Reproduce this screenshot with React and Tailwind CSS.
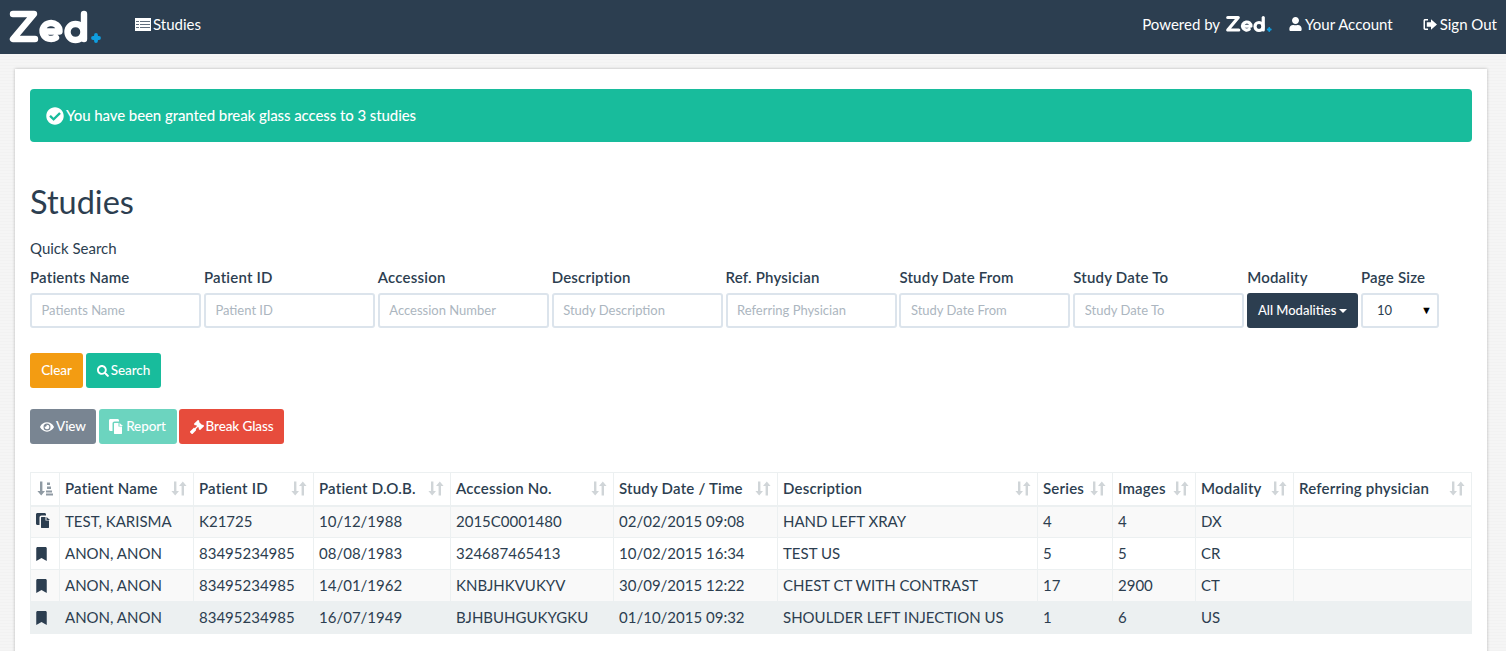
import { FaCheckCircle, FaEye, FaGavel, FaSearch, FaUser, FaBookmark } from "react-icons/fa"

const filters = [
    { label: "Patients Name", placeholder: "Patients Name" },
    { label: "Patient ID", placeholder: "Patient ID" },
    { label: "Accession", placeholder: "Accession Number" },
    { label: "Description", placeholder: "Study Description" },
    { label: "Ref. Physician", placeholder: "Referring Physician" },
    { label: "Study Date From", placeholder: "Study Date From" },
    { label: "Study Date To", placeholder: "Study Date To" },
]

const columns = [
    { name: "Patient Name", width: "w-[134px]" },
    { name: "Patient ID", width: "w-[120px]" },
    { name: "Patient D.O.B.", width: "w-[137px]" },
    { name: "Accession No.", width: "w-[163px]" },
    { name: "Study Date / Time", width: "w-[164px]" },
    { name: "Description", width: "w-[260px]" },
    { name: "Series", width: "w-[75px]" },
    { name: "Images", width: "w-[83px]" },
    { name: "Modality", width: "w-[98px]" },
    { name: "Referring physician", width: "" },
]

const rows = [
    ["TEST, KARISMA", "K21725", "10/12/1988", "2015C0001480", "02/02/2015 09:08", "HAND LEFT XRAY", "4", "4", "DX", ""],
    ["ANON, ANON", "83495234985", "08/08/1983", "324687465413", "10/02/2015 16:34", "TEST US", "5", "5", "CR", ""],
    ["ANON, ANON", "83495234985", "14/01/1962", "KNBJHKVUKYV", "30/09/2015 12:22", "CHEST CT WITH CONTRAST", "17", "2900", "CT", ""],
    ["ANON, ANON", "83495234985", "16/07/1949", "BJHBUHGUKYGKU", "01/10/2015 09:32", "SHOULDER LEFT INJECTION US", "1", "6", "US", ""],
]

function ZedLogo({ className }) {
    return (
        <svg viewBox="8 8 95 36" className={className} fill="none" stroke="currentColor" strokeWidth="6.4" strokeLinecap="round" strokeLinejoin="round">
            <path d="M13 13H34L13 38H35" />
            <path d="M43 30.5H59.5A8.5 8 0 1 0 56 36.5" />
            <circle cx="75.5" cy="31" r="8" />
            <path d="M84 13V38" />
            <path d="M93 37H99M96 34V40" stroke="#0f9ee0" strokeWidth="3.8" />
        </svg>
    )
}

function ListIcon() {
    return (
        <svg viewBox="0 0 16 13" className="w-4 h-[13px]" fill="white">
            <path d="M0 0H16V13H0ZM5 3V3.8H15V3ZM5 6V6.8H15V6ZM5 9V9.8H15V9ZM1 3V3.8H4V3ZM1 6V6.8H4V6ZM1 9V9.8H4V9Z" fillRule="evenodd" />
        </svg>
    )
}

function SignOutIcon() {
    return (
        <svg viewBox="0 0 14 13" className="w-3.5 h-[13px]" fill="white">
            <path d="M5 1H2.2C1 1 .5 1.7.5 2.7V10.3C.5 11.3 1 12 2.2 12H5V10.6H2.6C2.1 10.6 2 10.3 2 10V3C2 2.7 2.1 2.4 2.6 2.4H5Z" />
            <path d="M8 1.2L14 6.5L8 11.8V8.7H3.8V4.3H8Z" />
        </svg>
    )
}

function CopyIcon({ className }) {
    return (
        <svg viewBox="0 0 15 15" className={className} fill="currentColor">
            <path d="M0 1.5C0 .6.6 0 1.5 0H8.5C9.4 0 10 .6 10 1.5V2.5H5.5C4.4 2.5 3.5 3.4 3.5 4.5V12H1.5C.6 12 0 11.4 0 10.5Z" />
            <path d="M5 4.5C5 4.2 5.2 4 5.5 4H9.5V7.5H13V14.5C13 14.8 12.8 15 12.5 15H5.5C5.2 15 5 14.8 5 14.5Z" />
            <path d="M10.5 4L14 7H10.5Z" />
        </svg>
    )
}

function SortIcon() {
    return (
        <svg viewBox="0 0 16 14" className="w-4 h-[15px] shrink-0" fill="#d0d5d8">
            <path d="M3 0H5.4V9.5H8L4.2 14L.4 9.5H3Z" />
            <path d="M10.6 14H13V4.5H15.6L11.8 0L8 4.5H10.6Z" />
        </svg>
    )
}

function SortAttributesIcon() {
    return (
        <svg viewBox="0 0 16 14" className="w-4 h-[15px] mx-auto" fill="#8f9aa3">
            <path d="M3 0H5.4V9.5H8L4.2 14L.4 9.5H3Z" />
            <path d="M10 1H13V3.5H10ZM10 5H14V7.5H10ZM9 9H15V11H9ZM9 12H16V14H9Z" />
        </svg>
    )
}

function Button({ className, children }) {
    return (
        <button className={`h-[35px] rounded-[3px] text-white text-[13.5px] font-medium tracking-[-0.1px] flex items-center justify-center gap-[2px] ${className}`}>
            {children}
        </button>
    )
}

export default function App() {
    return (
        <div className="h-[651px] overflow-hidden bg-[repeating-linear-gradient(0deg,#f2f2f2_0,#f2f2f2_1px,#f5f5f5_1px,#f5f5f5_3px)] text-[#2c3e50] font-['Lato',sans-serif] text-[15px]">
            <nav className="h-[54px] bg-[#2c3e50] text-white flex items-center pb-[6px]">
                <ZedLogo className="w-[95px] h-9 ml-2 mt-[6px] text-white" />
                <a className="ml-8 flex items-center gap-[2px]"><ListIcon /> Studies</a>
                <div className="ml-auto flex items-center">
                    <span>Powered by</span>
                    <ZedLogo className="w-[48px] h-[18px] ml-[5px] text-white" />
                    <a className="ml-4 flex items-center gap-[3px]"><FaUser className="w-[13px] h-[14px]" /> Your Account</a>
                    <a className="ml-[30px] mr-[9px] flex items-center gap-[3px]"><SignOutIcon /> Sign Out</a>
                </div>
            </nav>

            <main className="mx-[15px] w-[1472px] mt-[15px] bg-white shadow-[0_0_3px_rgba(0,0,0,0.25)] px-[15px] pt-5 h-[600px]">
                <div className="h-[53px] bg-[#18bc9c] text-white rounded-[4px] flex items-center px-4 gap-[2px]">
                    <FaCheckCircle className="w-[18px] h-[18px]" />
                    <span className="font-medium tracking-[-0.08px]">You have been granted break glass access to 3 studies</span>
                </div>

                <h1 className="text-[32.5px] leading-[40px] mt-10">Studies</h1>
                <div className="mt-4 leading-[20px]">Quick Search</div>

                <div className="flex gap-[2.88px] mt-[9px]">
                    {filters.map(filter => {
                        return (
                            <div key={filter.label} className="w-[171px] flex flex-col">
                                <label className="font-semibold tracking-[0.2px] leading-[20px] mb-[6px]">{filter.label}</label>
                                <input
                                    placeholder={filter.placeholder}
                                    className="h-[35px] border-2 border-[#dce4ec] rounded-[3px] px-[9.5px] pb-[2px] text-[13px] placeholder:text-[#acb6c0]"
                                />
                            </div>
                        )
                    })}
                    <div className="w-[111px] flex flex-col">
                        <label className="font-semibold tracking-[0.2px] leading-[20px] mb-[6px]">Modality</label>
                        <button className="h-[35px] bg-[#2c3e50] text-white rounded-[3px] text-[13px] font-medium flex items-center justify-center gap-[3px]">
                            All Modalities
                            <span className="border-x-[4px] border-x-transparent border-t-[4px] border-t-white" />
                        </button>
                    </div>
                    <div className="w-[78px] flex flex-col">
                        <label className="font-semibold tracking-[0.2px] leading-[20px] mb-[6px]">Page Size</label>
                        <div className="h-[35px] border-2 border-[#dce4ec] rounded-[3px] text-[13px] flex items-center justify-between pl-[14px] pr-[5px]">
                            <span>10</span>
                            <span className="text-[11px] text-black">▼</span>
                        </div>
                    </div>
                </div>

                <div className="flex gap-[3px] mt-[25px]">
                    <Button className="w-[53px] bg-[#f39c12]">Clear</Button>
                    <Button className="w-[75px] bg-[#18bc9c]"><FaSearch className="w-[12px] h-[12px]" /> Search</Button>
                </div>

                <div className="flex gap-[2.5px] mt-[21px]">
                    <Button className="w-[66px] bg-[#798592]"><FaEye className="w-[14px] h-[14px]" /> View</Button>
                    <Button className="w-[78px] bg-[#6cd4bf]"><CopyIcon className="w-[15px] h-[15px]" /> Report</Button>
                    <Button className="w-[105px] bg-[#e74c3c]"><FaGavel className="w-[14px] h-[14px]" /> Break Glass</Button>
                </div>

                <table className="w-[1442px] table-fixed border-collapse mt-7">
                    <thead>
                        <tr className="h-[33px]">
                            <th className="w-[29px] border border-[#ecf0f1] border-b-2"><SortAttributesIcon /></th>
                            {columns.map(column => {
                                return (
                                    <th key={column.name} className={`${column.width} border border-[#ecf0f1] border-b-2 px-[5px] pb-[1px] font-semibold tracking-[0.2px] text-left`}>
                                        <div className="flex items-center justify-between pr-[1px]">
                                            <span className="whitespace-nowrap">{column.name}</span>
                                            <SortIcon />
                                        </div>
                                    </th>
                                )
                            })}
                        </tr>
                    </thead>
                    <tbody>
                        {rows.map((row, rowIndex) => {
                            const isLast = rowIndex === rows.length - 1
                            const rowColor = isLast ? "bg-[#ecf0f1]" : rowIndex % 2 === 0 ? "bg-[#f9f9f9]" : "bg-white"
                            return (
                                <tr key={rowIndex} className={`h-[32px] ${rowColor}`}>
                                    <td className={`border border-[#ecf0f1] pl-[5px] ${rowIndex === 0 ? "pb-[2px]" : ""}`}>
                                        {rowIndex === 0
                                            ? <CopyIcon className="w-[15px] h-[15px]" />
                                            : <FaBookmark className="w-[11px] h-[14px]" />}
                                    </td>
                                    {row.map((cell, cellIndex) => {
                                        return (
                                            <td key={cellIndex} className={`border border-[#ecf0f1] px-[5px] whitespace-nowrap ${rowIndex === 0 ? "pb-[2px]" : ""}`}>{cell}</td>
                                        )
                                    })}
                                </tr>
                            )
                        })}
                    </tbody>
                </table>
            </main>
        </div>
    )
}
